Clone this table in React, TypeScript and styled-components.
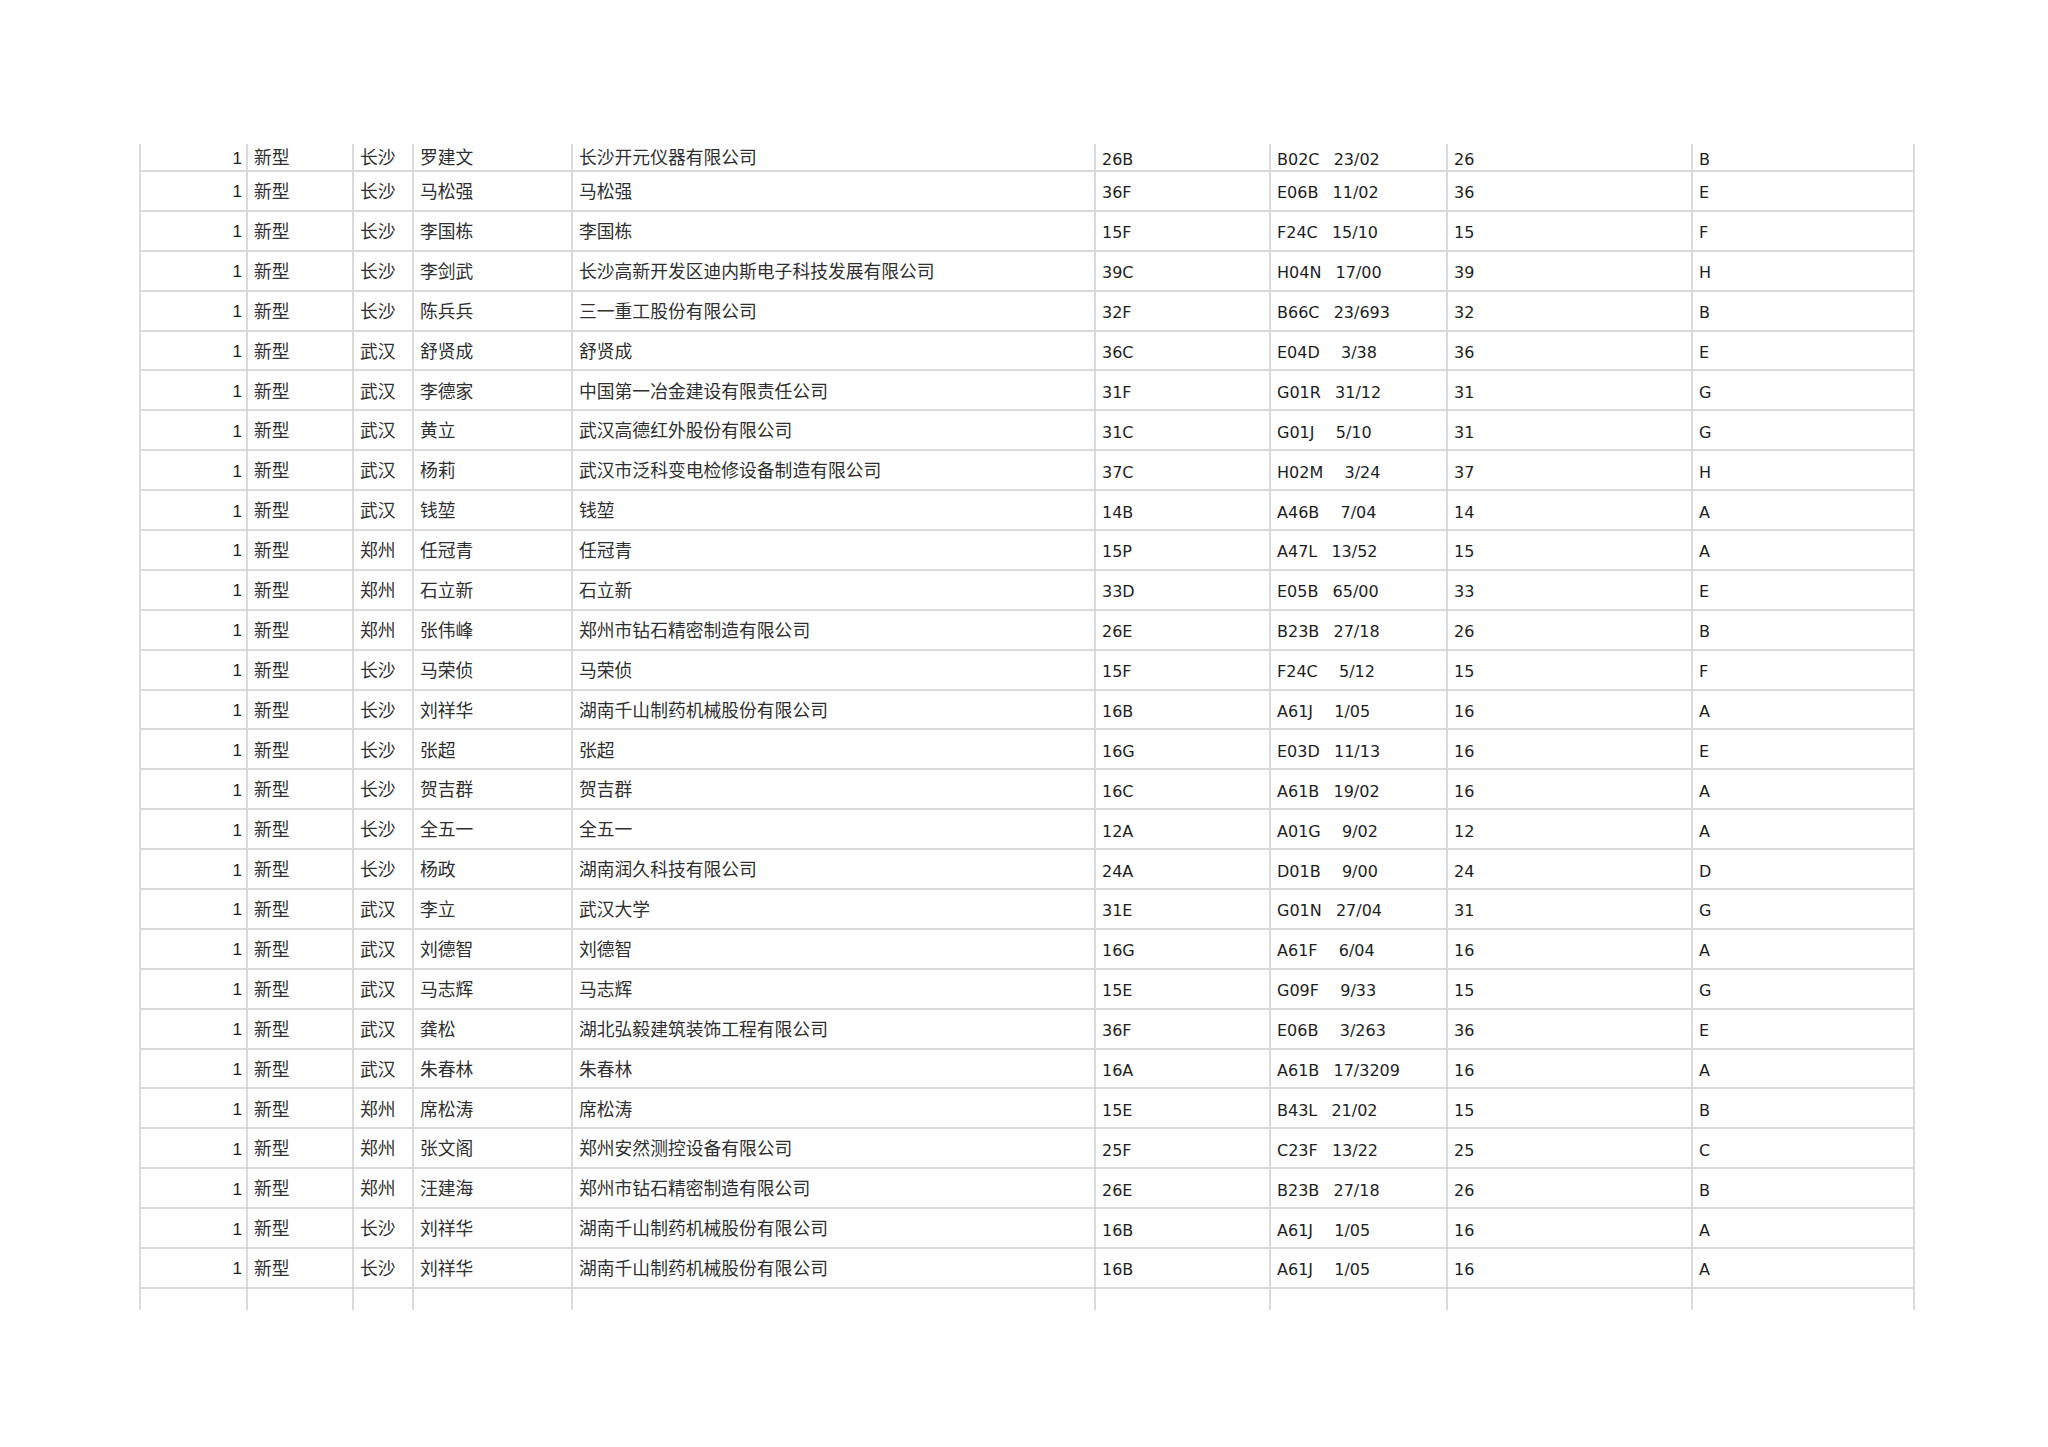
import React from "react";
import styled, { createGlobalStyle } from "styled-components";

const GlobalStyle = createGlobalStyle`
  html, body {
    margin: 0;
    padding: 0;
    background: #ffffff;
  }
  body {
    font-family: "Noto Sans CJK SC", sans-serif;
  }
`;

const COLUMNS = "107px 106px 60px 159px 523px 175px 177px 245px 224px";
const LINE = "#dadada";

const Page = styled.div`
  width: 2048px;
  height: 1447px;
  box-sizing: border-box;
  padding: 144px 0 0 139px;
  background: #fff;
`;

const Sheet = styled.div`
  display: flex;
  flex-direction: column;
  width: max-content;
`;

const Row = styled.div<{ $height: number; $last?: boolean }>`
  display: grid;
  grid-template-columns: ${COLUMNS};
  height: ${({ $height }) => $height}px;

  & > div {
    border-bottom: ${({ $last }) => ($last ? "none" : `2px solid ${LINE}`)};
  }
`;

type Kind = "num" | "cjk" | "latin";

const fonts: Record<Kind, string> = {
  num: `"Liberation Sans", Arial, sans-serif`,
  latin: `"DejaVu Sans", Verdana, sans-serif`,
  cjk: `"Noto Sans CJK SC", sans-serif`,
};

const sizes: Record<Kind, string> = {
  num: "17px",
  latin: "16px",
  cjk: "17.8px",
};

const Cell = styled.div<{ $kind: Kind; $end?: boolean }>`
  box-sizing: border-box;
  display: flex;
  align-items: center;
  justify-content: ${({ $kind }) => ($kind === "num" ? "flex-end" : "flex-start")};
  padding: ${({ $kind }) =>
    $kind === "num" ? "2px 4px 0 0" : $kind === "latin" ? "5px 0 0 6px" : "0 0 0 6px"};
  border-left: 2px solid ${LINE};
  border-right: ${({ $end }) => ($end ? `2px solid ${LINE}` : "none")};
  white-space: pre;
  overflow: hidden;
  color: ${({ $kind }) => ($kind === "cjk" ? "#2f2f2f" : "#1e1e1e")};
  font-family: ${({ $kind }) => fonts[$kind]};
  font-size: ${({ $kind }) => sizes[$kind]};
  word-spacing: ${({ $kind }) => ($kind === "latin" ? "2px" : "0")};
  line-height: 1;
`;

type Entry = [string, string, string, string, string, string, string, string];

const rows: Entry[] = [
  ["新型", "长沙", "罗建文", "长沙开元仪器有限公司", "26B", "B02C  23/02", "26", "B"],
  ["新型", "长沙", "马松强", "马松强", "36F", "E06B  11/02", "36", "E"],
  ["新型", "长沙", "李国栋", "李国栋", "15F", "F24C  15/10", "15", "F"],
  ["新型", "长沙", "李剑武", "长沙高新开发区迪内斯电子科技发展有限公司", "39C", "H04N  17/00", "39", "H"],
  ["新型", "长沙", "陈兵兵", "三一重工股份有限公司", "32F", "B66C  23/693", "32", "B"],
  ["新型", "武汉", "舒贤成", "舒贤成", "36C", "E04D   3/38", "36", "E"],
  ["新型", "武汉", "李德家", "中国第一冶金建设有限责任公司", "31F", "G01R  31/12", "31", "G"],
  ["新型", "武汉", "黄立", "武汉高德红外股份有限公司", "31C", "G01J   5/10", "31", "G"],
  ["新型", "武汉", "杨莉", "武汉市泛科变电检修设备制造有限公司", "37C", "H02M   3/24", "37", "H"],
  ["新型", "武汉", "钱堃", "钱堃", "14B", "A46B   7/04", "14", "A"],
  ["新型", "郑州", "任冠青", "任冠青", "15P", "A47L  13/52", "15", "A"],
  ["新型", "郑州", "石立新", "石立新", "33D", "E05B  65/00", "33", "E"],
  ["新型", "郑州", "张伟峰", "郑州市钻石精密制造有限公司", "26E", "B23B  27/18", "26", "B"],
  ["新型", "长沙", "马荣侦", "马荣侦", "15F", "F24C   5/12", "15", "F"],
  ["新型", "长沙", "刘祥华", "湖南千山制药机械股份有限公司", "16B", "A61J   1/05", "16", "A"],
  ["新型", "长沙", "张超", "张超", "16G", "E03D  11/13", "16", "E"],
  ["新型", "长沙", "贺吉群", "贺吉群", "16C", "A61B  19/02", "16", "A"],
  ["新型", "长沙", "全五一", "全五一", "12A", "A01G   9/02", "12", "A"],
  ["新型", "长沙", "杨政", "湖南润久科技有限公司", "24A", "D01B   9/00", "24", "D"],
  ["新型", "武汉", "李立", "武汉大学", "31E", "G01N  27/04", "31", "G"],
  ["新型", "武汉", "刘德智", "刘德智", "16G", "A61F   6/04", "16", "A"],
  ["新型", "武汉", "马志辉", "马志辉", "15E", "G09F   9/33", "15", "G"],
  ["新型", "武汉", "龚松", "湖北弘毅建筑装饰工程有限公司", "36F", "E06B   3/263", "36", "E"],
  ["新型", "武汉", "朱春林", "朱春林", "16A", "A61B  17/3209", "16", "A"],
  ["新型", "郑州", "席松涛", "席松涛", "15E", "B43L  21/02", "15", "B"],
  ["新型", "郑州", "张文阁", "郑州安然测控设备有限公司", "25F", "C23F  13/22", "25", "C"],
  ["新型", "郑州", "汪建海", "郑州市钻石精密制造有限公司", "26E", "B23B  27/18", "26", "B"],
  ["新型", "长沙", "刘祥华", "湖南千山制药机械股份有限公司", "16B", "A61J   1/05", "16", "A"],
  ["新型", "长沙", "刘祥华", "湖南千山制药机械股份有限公司", "16B", "A61J   1/05", "16", "A"],
];

const DataRow: React.FC<{ item: Entry; height: number }> = ({ item, height }) => {
  const [type, city, person, company, code, ipc, cls, section] = item;
  return (
    <Row $height={height}>
      <Cell $kind="num">1</Cell>
      <Cell $kind="cjk">{type}</Cell>
      <Cell $kind="cjk">{city}</Cell>
      <Cell $kind="cjk">{person}</Cell>
      <Cell $kind="cjk">{company}</Cell>
      <Cell $kind="latin">{code}</Cell>
      <Cell $kind="latin">{ipc}</Cell>
      <Cell $kind="latin">{cls}</Cell>
      <Cell $kind="latin" $end>
        {section}
      </Cell>
    </Row>
  );
};

const App: React.FC = () => {
  return (
    <>
      <GlobalStyle />
      <Page>
        <Sheet>
          {rows.map((item, i) => (
            <DataRow item={item} height={i === 0 ? 28 : 39.9} key={`row-${i}`} />
          ))}
          <Row $height={21} $last>
            <Cell $kind="num" />
            <Cell $kind="cjk" />
            <Cell $kind="cjk" />
            <Cell $kind="cjk" />
            <Cell $kind="cjk" />
            <Cell $kind="latin" />
            <Cell $kind="latin" />
            <Cell $kind="latin" />
            <Cell $kind="latin" $end />
          </Row>
        </Sheet>
      </Page>
    </>
  );
};

export default App;
